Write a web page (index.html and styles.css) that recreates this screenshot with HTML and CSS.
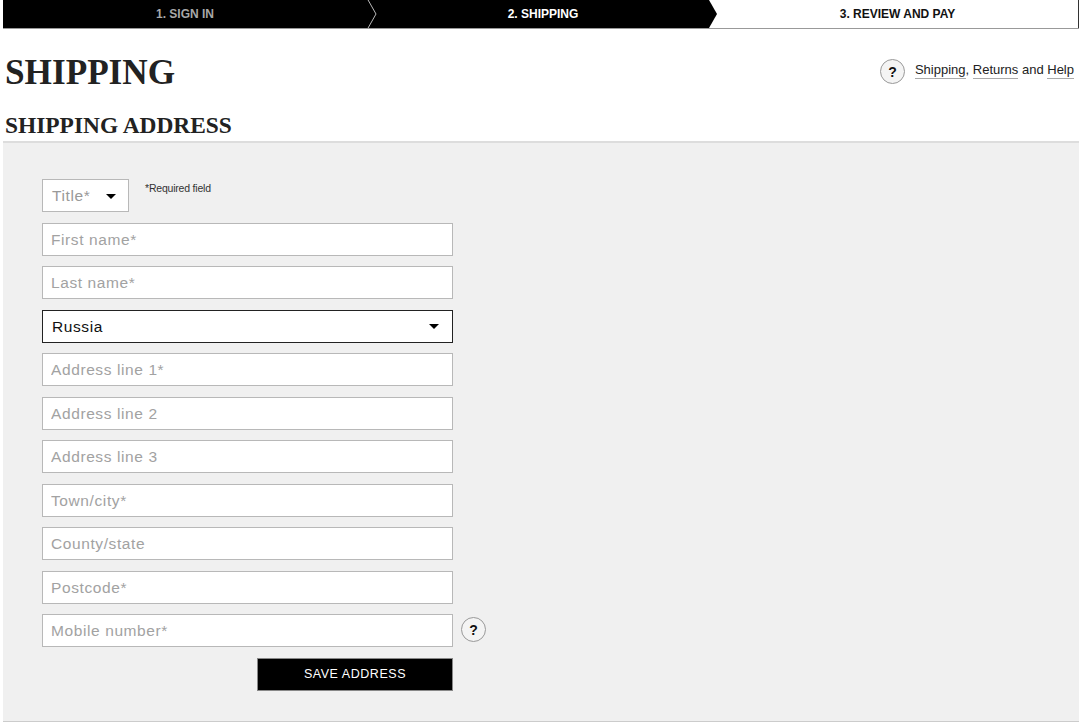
FILE: index.html
```html
<!DOCTYPE html>
<html lang="en">
<head>
<meta charset="utf-8">
<title>Shipping</title>
<link rel="stylesheet" href="styles.css">
</head>
<body>
<div class="page">
  <nav class="steps">
    <div class="step step-done">1. SIGN IN
      <svg class="chev" width="12" height="28" viewBox="0 0 12 28"><path d="M0.5 -1 L9 14 L0.5 29" fill="none" stroke="#e8e8e8" stroke-width="0.8"/></svg>
    </div>
    <div class="step step-current">2. SHIPPING</div>
    <div class="step step-next">3. REVIEW AND PAY</div>
  </nav>
  <header class="head">
    <h1 class="title">SHIPPING</h1>
    <div class="help">
      <span class="q q-head">?</span>
      <span class="help-links"><a href="#">Shipping</a>, <a href="#">Returns</a> and <a href="#">Help</a></span>
    </div>
  </header>
  <h2 class="subtitle">SHIPPING ADDRESS</h2>
  <section class="panel">
    <form class="form">
      <div class="title-row">
        <div class="select select-title"><span>Title*</span>
          <svg class="caret" width="10" height="5" viewBox="0 0 10 5"><path d="M0 0H10L5 5Z" fill="#000"/></svg>
        </div>
        <span class="req">*Required field</span>
      </div>
      <input class="field" placeholder="First name*">
      <input class="field" placeholder="Last name*">
      <div class="select select-country"><span>Russia</span>
        <svg class="caret" width="10" height="5" viewBox="0 0 10 5"><path d="M0 0H10L5 5Z" fill="#000"/></svg>
      </div>
      <input class="field" placeholder="Address line 1*">
      <input class="field" placeholder="Address line 2">
      <input class="field" placeholder="Address line 3">
      <input class="field" placeholder="Town/city*">
      <input class="field" placeholder="County/state">
      <input class="field" placeholder="Postcode*">
      <div class="phone-row">
        <input class="field" placeholder="Mobile number*">
        <span class="q q-form">?</span>
      </div>
      <button class="save" type="button">SAVE ADDRESS</button>
    </form>
  </section>
</div>
</body>
</html>
```
FILE: styles.css
```css
* { box-sizing: border-box; }
html, body { margin: 0; padding: 0; background: #fff; }
body { font-family: "Liberation Sans", Arial, sans-serif; color: #222; height: 722px; overflow: hidden; }
.page { padding-left: 3px; padding-right: 1px; }

.steps { display: flex; height: 29px; border-bottom: 1px solid #999; font-size: 12px; font-weight: 700; }
.step { display: flex; align-items: center; justify-content: center; position: relative; padding-bottom: 1px; }
.step-done { width: 364px; background: #000; color: #a8a8a8; }
.chev { position: absolute; right: -12px; top: 0; z-index: 2; }
.step-current { width: 342px; background: #000; color: #fff; padding-left: 10px; }
.step-current::after { content: ""; position: absolute; left: 100%; top: 0; width: 8px; height: 28px; background: #000; clip-path: polygon(0 0, 100% 50%, 0 100%); z-index: 1; }
.step-next { flex: 1; background: #fff; color: #111; border-right: 1px solid #333; padding-left: 8px; }

.head { display: flex; justify-content: space-between; align-items: center; height: 45px; margin-top: 21px; padding-left: 2px; padding-right: 5px; }
.title { margin: 0; font: 700 35.2px/45px "Liberation Serif", "Times New Roman", serif; color: #222; }
.help { display: flex; align-items: center; gap: 10px; font-size: 13px; color: #222; padding-bottom: 2px; }
.help-links { position: relative; top: -2px; }
.help-links a { color: #222; text-decoration: none; border-bottom: 1px solid #aaa; padding-bottom: 1px; }
.q { display: inline-flex; align-items: center; justify-content: center; width: 25px; height: 25px; border: 1px solid #999; border-radius: 50%; background: #f4f4f4; font-size: 14px; font-weight: 700; color: #111; }

.subtitle { margin: 17px 0 0; font: 700 23.4px/27px "Liberation Serif", "Times New Roman", serif; color: #222; padding-left: 2px; }

.panel { margin-top: 2px; height: 581px; background: #f0f0f0; border-top: 2px solid #ddd; border-bottom: 1px solid #ccc; padding: 36px 0 0 39px; }
.form { width: 411px; display: flex; flex-direction: column; gap: 10.5px; }

.title-row { display: flex; align-items: flex-start; gap: 16px; }
.select { display: flex; align-items: center; justify-content: space-between; height: 33px; background: #fff; font-size: 15.5px; letter-spacing: 0.6px; padding-top: 1px; }
.select-title { width: 87px; border: 1px solid #b8b8b8; color: #999; padding-right: 12px; padding-left: 9px; }
.select-country { width: 411px; border: 1px solid #222; color: #111; padding-right: 13px; padding-left: 9px; }
.req { font-size: 10.5px; letter-spacing: -0.2px; color: #333; padding-top: 3px; }

.field { display: block; width: 411px; height: 33px; background: #fff; border: 1px solid #b8b8b8; border-radius: 0; outline: 0; padding: 1px 8px 0; font: 15.5px "Liberation Sans", Arial, sans-serif; letter-spacing: 0.6px; }
.field::placeholder { color: #a2a2a2; opacity: 1; }

.phone-row { display: flex; align-items: center; gap: 8px; width: 450px; }
.q-form { flex: none; position: relative; top: -1px; }

.save { align-self: flex-end; width: 196px; height: 33px; background: #000; color: #fff; border: 1px solid #888; font: 12.5px "Liberation Sans", Arial, sans-serif; letter-spacing: 0.55px; padding: 0; }
```
